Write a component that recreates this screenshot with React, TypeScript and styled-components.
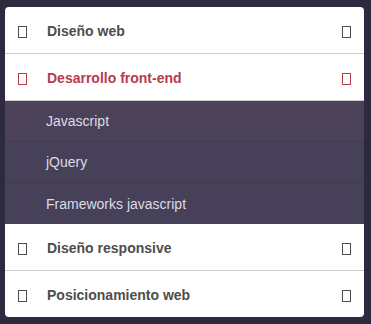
import React from 'react';
import styled, { createGlobalStyle } from 'styled-components';

const GlobalStyle = createGlobalStyle`
	html, body {
		margin: 0;
		padding: 0;
		background: #2d2a40;
	}
	body {
		font-family: 'Liberation Sans', Arial, sans-serif;
	}
`;

type Item = { title: string; open?: boolean; children?: string[] };

const items: Item[] = [
	{ title: 'Diseño web' },
	{ title: 'Desarrollo front-end', open: true, children: ['Javascript', 'jQuery', 'Frameworks javascript'] },
	{ title: 'Diseño responsive' },
	{ title: 'Posicionamiento web' },
];

export default function App() {
	return (
		<>
			<GlobalStyle />
			<Page>
				<Accordion>
					{items.map((item, i) => (
						<li key={item.title}>
							<Header $active={!!item.open} $last={i === items.length - 1}>
								<Glyph />
								<Title>{item.title}</Title>
								<Glyph />
							</Header>
							{item.open && item.children && (
								<SubMenu>
									{item.children.map((child, j) => (
										<SubItem key={child} $hover={j === 0}>
											{child}
										</SubItem>
									))}
								</SubMenu>
							)}
						</li>
					))}
				</Accordion>
			</Page>
		</>
	);
}

const Page = styled.div`
	padding: 7px 7px 7px 5px;
`;

const Accordion = styled.ul`
	list-style: none;
	margin: 0;
	padding: 0;
	background: #fff;
	border-radius: 4px;
	overflow: hidden;
	width: 359px;
`;

const Header = styled.div<{ $active: boolean; $last: boolean }>`
	display: flex;
	align-items: center;
	height: 46px;
	padding: 0 13px 0 13px;
	box-sizing: content-box;
	border-bottom: ${(p) => (p.$last ? 'none' : '1px solid #cccccc')};
	color: ${(p) => (p.$active ? '#b63b4f' : '#4d4d4d')};
	font-weight: bold;
	font-size: 14px;
`;

const Title = styled.span`
	flex: 1;
	padding-left: 20px;
	padding-top: 1px;
`;

const Glyph = styled.span`
	display: inline-block;
	width: 7px;
	height: 10px;
	border: 1px solid currentColor;
	margin-top: 4px;
`;

const SubMenu = styled.ul`
	list-style: none;
	margin: 0;
	padding: 0;
	background: #464158;
`;

const SubItem = styled.li<{ $hover: boolean }>`
	height: 41px;
	box-sizing: border-box;
	display: flex;
	align-items: center;
	padding-left: 41px;
	font-size: 14px;
	color: #dcdbe6;
	background: ${(p) => (p.$hover ? '#4b4259' : '#464158')};
	border-bottom: 1px solid #403b51;
	&:last-child {
		border-bottom: none;
	}
`;
